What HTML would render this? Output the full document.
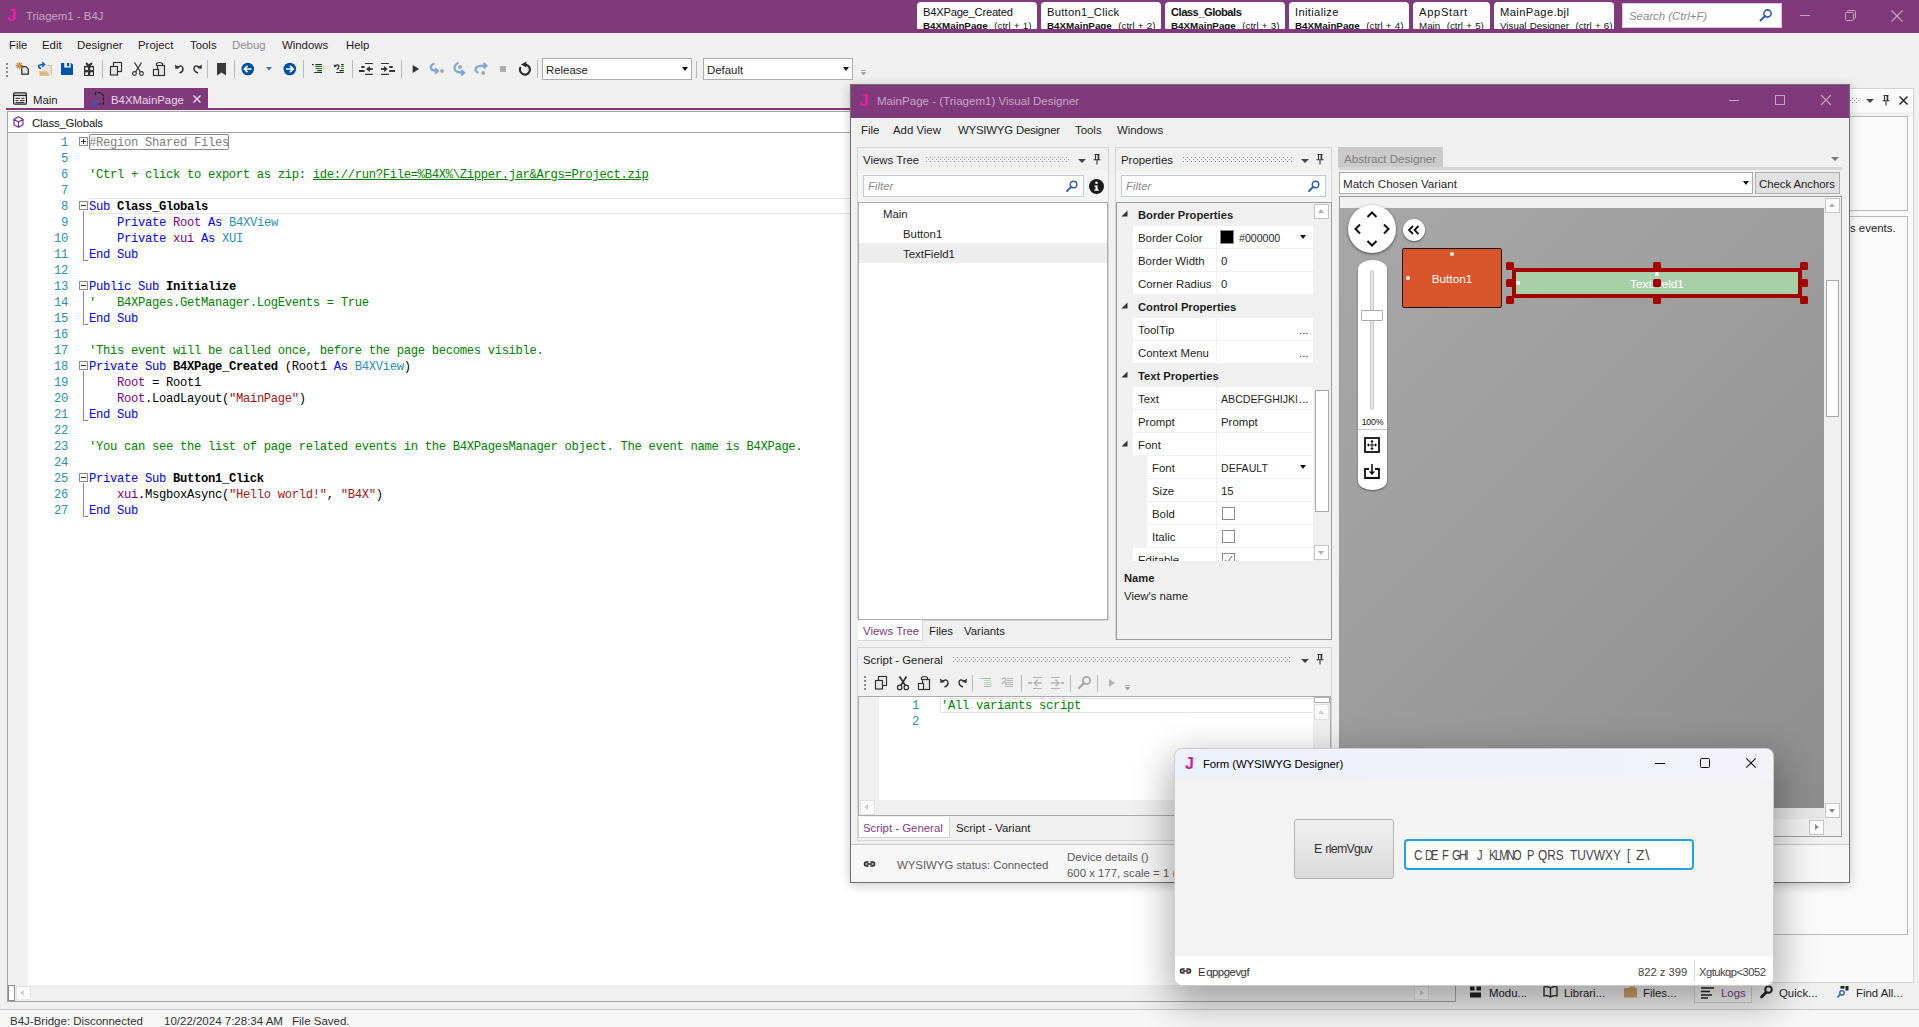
<!DOCTYPE html>
<html><head><meta charset="utf-8">
<style>
*{box-sizing:border-box;margin:0;padding:0}
html,body{width:1919px;height:1027px;overflow:hidden;background:#f0f0f0;font-family:"Liberation Sans",sans-serif;font-size:11.4px;color:#1e1e1e}
.a{position:absolute}
.t{position:absolute;white-space:nowrap;line-height:16px}
svg{position:absolute;overflow:visible}
/* main title */
#tb{left:0;top:0;width:1919px;height:33px;background:#80397b}
.qt{position:absolute;top:2px;height:27px;background:#fff;border-radius:4px 4px 1px 1px;overflow:hidden}
.qt .l1{position:absolute;left:6px;top:3px;font-size:11.2px;letter-spacing:-0.25px;line-height:14px;white-space:nowrap;color:#111}
.qt .l2{position:absolute;left:6px;top:18px;font-size:9.8px;line-height:12px;white-space:nowrap;color:#111;word-spacing:0.5px}
.qt .l2 b{font-weight:bold}
.mi{position:absolute;top:37px;font-size:11.4px;line-height:16px;white-space:nowrap;color:#1b1b1b}
/* code */
.ln{margin-top:1px;position:absolute;left:28px;width:40px;text-align:right;color:#2b91af;font-family:"Liberation Mono",monospace;font-size:12.2px;letter-spacing:-0.32px;line-height:17px;height:16px}
.cl{margin-top:1px;position:absolute;left:89px;white-space:pre;font-family:"Liberation Mono",monospace;font-size:12.2px;letter-spacing:-0.32px;line-height:17px;height:16px;color:#000}
.k{color:#0000ff}.i{color:#800080}.ty{color:#2b91af}.c{color:#008000}.s{color:#a31515}.b{font-weight:bold}
.dots{position:absolute;height:5px;background:conic-gradient(#c4c4c4 25%,transparent 0 50%,#c4c4c4 0 75%,transparent 0) 0 0/2px 2px}
.dd{border:4px solid transparent;border-top:4px solid #444;border-bottom:0;width:0;height:0}
.hd{position:absolute;width:8px;height:8px;background:#a30000;border-radius:1.5px}
</style></head><body>

<div id="main">
<svg width="0" height="0" style="left:0;top:0"><defs><pattern id="dp" width="4" height="4" patternUnits="userSpaceOnUse"><rect x="0" y="0" width="1" height="1" fill="#8e8e8e"/><rect x="2" y="2" width="1" height="1" fill="#8e8e8e"/></pattern></defs></svg>
<div id="tb" class="a"></div>
<!-- title content -->
<div class="t" style="left:7px;top:6px;font-size:17px;font-weight:bold;color:#e8209a;line-height:20px">J</div>
<div class="t" style="left:26px;top:8px;font-size:11.4px;color:#c9a6c7">Triagem1 - B4J</div>
<div class="qt" style="left:917px;width:120px"><div class="l1" style="letter-spacing:-0.24px">B4XPage_Created</div><div class="l2"><b>B4XMainPage</b>&nbsp; (ctrl + 1)</div></div>
<div class="qt" style="left:1041px;width:120px"><div class="l1" style="letter-spacing:0.26px">Button1_Click</div><div class="l2"><b>B4XMainPage</b>&nbsp; (ctrl + 2)</div></div>
<div class="qt" style="left:1165px;width:120px"><div class="l1" style="font-weight:bold;letter-spacing:-0.52px">Class_Globals</div><div class="l2"><b>B4XMainPage</b>&nbsp; (ctrl + 3)</div></div>
<div class="qt" style="left:1289px;width:120px"><div class="l1" style="letter-spacing:0.34px">Initialize</div><div class="l2"><b>B4XMainPage</b>&nbsp; (ctrl + 4)</div></div>
<div class="qt" style="left:1413px;width:77px"><div class="l1" style="letter-spacing:0.67px">AppStart</div><div class="l2">Main&nbsp; (ctrl + 5)</div></div>
<div class="qt" style="left:1494px;width:120px"><div class="l1" style="letter-spacing:0.39px">MainPage.bjl</div><div class="l2">Visual Designer&nbsp; (ctrl + 6)</div></div>
<div class="a" style="left:1622px;top:3px;width:160px;height:25px;background:#fff;border:1px solid #d9c9d9"></div>
<div class="t" style="left:1629px;top:8px;font-size:11.4px;font-style:italic;color:#8a8a8a">Search (Ctrl+F)</div>
<svg style="left:1759px;top:8px" width="14" height="14" viewBox="0 0 14 14"><circle cx="8.5" cy="5.5" r="3.6" fill="none" stroke="#2a5caa" stroke-width="1.6"/><path d="M6 8 L1.5 12.5" stroke="#2a5caa" stroke-width="2" stroke-linecap="round"/></svg>
<!-- window buttons -->
<div class="a" style="left:1800px;top:15px;width:10px;height:1px;background:#c7a3c5"></div>
<svg style="left:1845px;top:10px" width="11" height="11" viewBox="0 0 11 11"><rect x="0.5" y="2.5" width="8" height="8" rx="1" fill="none" stroke="#c7a3c5"/><path d="M2.5 2.5 V1.5 Q2.5 0.5 3.5 0.5 H9.5 Q10.5 0.5 10.5 1.5 V7.5 Q10.5 8.5 9.5 8.5 H8.5" fill="none" stroke="#c7a3c5"/></svg>
<svg style="left:1891px;top:10px" width="12" height="12" viewBox="0 0 12 12"><path d="M0.5 0.5 L11.5 11.5 M11.5 0.5 L0.5 11.5" stroke="#c7a3c5" stroke-width="1.1"/></svg>

<!-- menu -->
<div class="mi" style="left:9px">File</div>
<div class="mi" style="left:42px">Edit</div>
<div class="mi" style="left:77px">Designer</div>
<div class="mi" style="left:138px">Project</div>
<div class="mi" style="left:190px">Tools</div>
<div class="mi" style="left:232px;color:#8e8e8e">Debug</div>
<div class="mi" style="left:282px">Windows</div>
<div class="mi" style="left:346px">Help</div>

<!-- toolbar placeholder -->
<!-- toolbar -->
<svg style="left:0;top:56px" width="560" height="28" viewBox="0 0 560 28">
<!-- grip -->
<g fill="#8a8a8a"><rect x="6" y="7" width="2" height="2"/><rect x="6" y="11" width="2" height="2"/><rect x="6" y="15" width="2" height="2"/><rect x="6" y="19" width="2" height="2"/></g>
<!-- new -->
<path d="M21.800 10.600 H26 L28.300 12.900 V18.200 H21.800 Z" fill="#e6e6e6" stroke="#333" stroke-width="1.300"/>
<g stroke="#c8731a" stroke-width="1.100"><path d="M19.400 6 V13.200 M15.800 9.600 H23 M16.900 7.100 L21.900 12.100 M21.900 7.100 L16.900 12.100"/></g><circle cx="19.400" cy="9.600" r="1" fill="#fff" stroke="#c8731a" stroke-width="0.800"/>
<!-- open -->
<path d="M46.500 9.500 H51.200 V19.200" fill="none" stroke="#deb777" stroke-width="1.200"/><rect x="42" y="10.200" width="8.500" height="8" fill="#e4e4e4"/>
<path d="M39.200 15.300 H46.500 L50 19.700 H39.700 Z" fill="#deb777"/>
<path d="M41 12.400 Q37.300 11.200 39.300 9.400 Q40.600 8.500 43.300 8.500" fill="none" stroke="#0a56b0" stroke-width="1.700"/><path d="M42.100 6.300 L44.600 8.500 L42.100 10.700" fill="none" stroke="#0a56b0" stroke-width="1.500"/>
<!-- save -->
<path d="M61 7 H71.200 L73 8.800 V19 H61 Z" fill="#0054a6"/><rect x="64.200" y="7" width="6.500" height="4.600" fill="#ececec"/><rect x="67" y="7" width="2.100" height="3.200" fill="#0054a6"/>
<!-- gift -->
<rect x="84" y="9.800" width="10" height="10.200" fill="#333"/><g fill="#f2f2f2"><rect x="85.300" y="11.400" width="2.600" height="2.600"/><rect x="90.300" y="11.400" width="2.600" height="2.600"/><rect x="85.300" y="16.300" width="2.600" height="2.700"/><rect x="90.300" y="16.300" width="2.600" height="2.700"/></g>
<path d="M89 10 L86.800 7.700 M89 10 L91.200 7.700" stroke="#333" stroke-width="2.300" fill="none" stroke-linecap="round"/>
<!-- sep -->
<rect x="102" y="4" width="1" height="18" fill="#b9b9b9"/>
<!-- copy -->
<rect x="113.5" y="6.5" width="8" height="9" fill="#f0f0f0" stroke="#333" stroke-width="1.2"/><rect x="110.500" y="10.500" width="7" height="8.500" fill="#e6e6e6" stroke="#333" stroke-width="1.2"/>
<!-- cut -->
<path d="M134.500 6.500 L140.500 16 M141.500 6.500 L135.500 16" stroke="#333" stroke-width="1.3" fill="none"/><circle cx="134.500" cy="17.500" r="1.900" fill="none" stroke="#333" stroke-width="1.1"/><circle cx="141.500" cy="17.500" r="1.900" fill="none" stroke="#333" stroke-width="1.1"/>
<!-- paste -->
<path d="M156.500 10 V7.500 Q159.500 5.500 162.500 7.500 V10" fill="none" stroke="#333" stroke-width="1.2"/><rect x="157.500" y="9.500" width="7" height="10" fill="#e6e6e6" stroke="#333" stroke-width="1.2"/><rect x="153.500" y="13.500" width="5" height="6" fill="#f0f0f0" stroke="#333" stroke-width="1.2"/>
<!-- undo -->
<path d="M176.500 11.500 Q183 8 183 13 Q183 16 179.500 17" fill="none" stroke="#333" stroke-width="1.5"/><path d="M175 8.500 L175.500 13 L180 12" fill="#333"/>
<!-- redo -->
<path d="M200.500 11.500 Q194 8 194 12.500 Q194 15.500 198 17" fill="none" stroke="#333" stroke-width="1.5"/><path d="M202 8.500 L201.500 13 L197 12" fill="#333"/>
<rect x="207" y="4" width="1" height="18" fill="#b9b9b9"/>
<!-- bookmark -->
<path d="M217 7 H226 V19.500 L221.500 16.500 L217 19.500 Z" fill="#3a3a3a"/>
<rect x="234" y="4" width="1" height="18" fill="#b9b9b9"/>
<!-- back -->
<circle cx="247.800" cy="13" r="6.300" fill="#0050a0"/><path d="M251.500 13 H244.500 M247.500 9.800 L244.300 13 L247.500 16.200" stroke="#fff" stroke-width="1.700" fill="none"/>
<path d="M266 11 H272 L269 14.500 Z" fill="#3d6fb6"/>
<circle cx="289.800" cy="13" r="6.300" fill="#0050a0"/><path d="M286 13 H293 M290 9.800 L293.200 13 L290 16.200" stroke="#fff" stroke-width="1.700" fill="none"/>
<rect x="303" y="4" width="1" height="18" fill="#b9b9b9"/>
<!-- comment -->
<g stroke="#333" stroke-width="1.100"><path d="M312 8.600 H313.700 M315.300 8.600 H322 M317.200 14.600 H322 M314.100 16.500 H322"/></g><g stroke="#2e8b1e" stroke-width="1.100"><path d="M315.300 10.500 H322 M315.300 12.500 H322"/></g>
<!-- uncomment -->
<g stroke="#333" stroke-width="1.100" fill="none"><path d="M341 8.600 H343.800 M339.400 14.600 H343.800 M336.100 16.500 H343.800"/><path d="M335 9.700 Q338.600 7.800 339 10.300 Q339 12 336.800 13.700" stroke-width="1.300"/></g><path d="M333.800 8.200 L334.200 11.400 L337 10.200 Z" fill="#333"/><g stroke="#2e8b1e" stroke-width="1.100"><path d="M341 10.500 H343.800 M341 12.500 H343.800"/></g>
<rect x="352" y="4" width="1" height="18" fill="#b9b9b9"/>
<!-- outdent -->
<g stroke="#333" fill="none"><path d="M365 7.500 H372.800 M365 18.400 H372.800" stroke-width="1.100"/><path d="M361.300 11 H364.500 M359 15 H364.500" stroke-width="1.900"/><path d="M367.500 13 H372.800" stroke-width="1.800"/></g><path d="M366 13 L369.800 9.900 V16.100 Z" fill="#333"/>
<!-- indent -->
<g stroke="#333" fill="none"><path d="M381 7.500 H388.900 M381 18.400 H388.900" stroke-width="1.100"/><path d="M389.200 11 H392.700 M389.200 15 H395" stroke-width="1.900"/><path d="M381 13 H386" stroke-width="1.800"/></g><path d="M387.800 13 L384 9.900 V16.100 Z" fill="#333"/>
<rect x="401" y="4" width="1" height="18" fill="#b9b9b9"/>
<!-- play -->
<path d="M412.700 9 L419.200 13 L412.700 17.100 Z" fill="#333"/>
<!-- step in -->
<path d="M434.600 7.500 Q430.500 8.800 430.800 11.500 Q431.300 14.800 437 15" fill="none" stroke="#7ca8d4" stroke-width="2.200"/><path d="M435 12.200 L438 15 L435 17.800" fill="none" stroke="#7ca8d4" stroke-width="2"/><circle cx="442" cy="15" r="2" fill="#a9a9a9"/>
<!-- step over -->
<path d="M458.500 6.800 Q454.300 8.500 454.600 12.500 Q455.100 16.600 463 16.800" fill="none" stroke="#7ca8d4" stroke-width="2.200"/><path d="M461.200 14 L464.200 16.800 L461.200 19.600" fill="none" stroke="#7ca8d4" stroke-width="2"/><circle cx="460" cy="11" r="2" fill="#a9a9a9"/>
<!-- step out -->
<path d="M478.400 17 Q474.500 15 476 11.800 Q477.500 9.600 485.500 9.700" fill="none" stroke="#7ca8d4" stroke-width="2.200"/><path d="M483.600 6.900 L486.600 9.700 L483.600 12.500" fill="none" stroke="#7ca8d4" stroke-width="2"/><circle cx="483.200" cy="17" r="2" fill="#a9a9a9"/>
<!-- stop -->
<rect x="500" y="10" width="6" height="6" fill="#adadad"/>
<!-- restart -->
<path d="M520.600 11 A5 5 0 1 0 526 8.700" fill="none" stroke="#2d2d2d" stroke-width="2.200"/><path d="M521 8.600 L526.400 5.400 L526.400 11.600 Z" fill="#2d2d2d"/>
<rect x="537" y="4" width="1" height="18" fill="#b9b9b9"/>
</svg>

<div class="a" style="left:696px;top:61px;width:1px;height:17px;background:#b9b9b9"></div>
<svg style="left:861px;top:70px" width="6" height="6" viewBox="0 0 6 6"><path d="M0 0.500 H5 M0.500 2.500 H4.500 L2.500 5 Z" stroke="#9a9a9a" fill="#9a9a9a" stroke-width="0.800"/></svg>


<!-- combos -->
<div class="a" style="left:542px;top:58px;width:150px;height:22px;background:#fff;border:1px solid #ababab"></div>
<div class="t" style="left:546px;top:62px;font-size:11.4px">Release</div>
<div class="a" style="left:682px;top:67px;border:3px solid transparent;border-top:4px solid #111;border-bottom:0"></div>
<div class="a" style="left:703px;top:58px;width:150px;height:22px;background:#fff;border:1px solid #ababab"></div>
<div class="t" style="left:707px;top:62px;font-size:11.4px">Default</div>
<div class="a" style="left:843px;top:67px;border:3px solid transparent;border-top:4px solid #111;border-bottom:0"></div>

<!-- doc tabs -->
<div class="a" style="left:84px;top:88px;width:124px;height:21px;background:#80397b"></div>
<div class="a" style="left:6px;top:108px;width:1450px;height:2px;background:#80397b"></div>
<div class="t" style="left:33px;top:92px;font-size:11.4px">Main</div>
<div class="t" style="left:111px;top:92px;font-size:11.4px;color:#e9d9e8">B4XMainPage</div>
<svg style="left:193px;top:95px" width="8" height="8" viewBox="0 0 8 8"><path d="M0.5 0.5 L7.5 7.5 M7.5 0.5 L0.5 7.5" stroke="#f0e4ef" stroke-width="1.2"/></svg>

<!-- tab icons -->
<svg style="left:13px;top:92px" width="14" height="13" viewBox="0 0 14 13"><rect x="0.6" y="0.8" width="12.8" height="11.4" rx="1" fill="none" stroke="#222" stroke-width="1.2"/><path d="M0.6 3.4 H13.4" stroke="#222" stroke-width="1.4"/><path d="M2.6 6.3 H7 M8.4 6.3 H11.4 M2.6 8.6 H5.4 M6.8 8.6 H11.4 M2.6 10.6 H11.4" stroke="#222" stroke-width="1" fill="none"/></svg>
<svg style="left:92px;top:92px" width="12" height="14" viewBox="0 0 12 14"><path d="M3.5 3 V0.6 H8.5 L11.4 3.5 V12 H6.5" fill="none" stroke="#1c1c1c" stroke-width="1.1" stroke-dasharray="3.2 1.3"/><path d="M0.5 10 H4.5 M3 8.3 L4.8 10 L3 11.7 M5.5 12.3 H1.8 M3.2 10.8 L1.6 12.3 L3.2 13.8" fill="none" stroke="#1a66d0" stroke-width="1.1"/></svg>
<!-- editor frame -->
<div class="a" style="left:7px;top:111px;width:1449px;height:891px;background:#fff;border:1px solid #a5a5a5"></div>
<div class="a" style="left:8px;top:132px;width:1447px;height:1px;background:#a5a5a5"></div>
<div class="a" style="left:8px;top:133px;width:20px;height:852px;background:#f0f0f0"></div>
<svg style="left:13px;top:116px" width="11" height="12" viewBox="0 0 11 12"><path d="M5.5 0.8 L10 3.3 V8.7 L5.5 11.2 L1 8.700 V3.300 Z M1 3.300 L5.500 6 L10 3.300 M5.500 6 V11.200" fill="none" stroke="#6a2c91" stroke-width="1.100" stroke-linejoin="round"/></svg>
<div class="t" style="left:32px;top:115px;font-size:11.4px;letter-spacing:-0.2px;color:#111">Class_Globals</div>
<!-- current line -->
<div class="a" style="left:89px;top:198px;width:1349px;height:16px;border-top:1px solid #e6e6e6;border-bottom:1px solid #e6e6e6"></div>
<!-- region box -->
<div class="a" style="left:89px;top:134px;width:140px;height:16px;border:1px solid #8a8a8a;border-radius:2px"></div>
<!--CODE-->
<div class="ln" style="top:134px">1</div>
<div class="cl" style="top:134px"><span style="color:#808080">#Region Shared Files</span></div>
<svg style="left:79px;top:137px" width="9" height="9" viewBox="0 0 9 9"><rect x="0.5" y="0.5" width="8" height="8" fill="#fff" stroke="#8c8c8c"/><path d="M2 4.5 H7 M4.5 2 V7" stroke="#333" stroke-width="1"/></svg>
<div class="ln" style="top:150px">5</div>
<div class="ln" style="top:166px">6</div>
<div class="cl" style="top:166px"><span class="c">'Ctrl + click to export as zip: <u>ide://run?File=%B4X%\Zipper.jar&amp;Args=Project.zip</u></span></div>
<div class="ln" style="top:182px">7</div>
<div class="ln" style="top:198px">8</div>
<div class="cl" style="top:198px"><span class="k">Sub</span> <b>Class_Globals</b></div>
<svg style="left:79px;top:201px" width="9" height="9" viewBox="0 0 9 9"><rect x="0.5" y="0.5" width="8" height="8" fill="#fff" stroke="#8c8c8c"/><path d="M2 4.5 H7" stroke="#333" stroke-width="1"/></svg>
<div class="a" style="left:83px;top:211px;width:5px;height:50px;border-left:1px solid #8c8c8c;border-bottom:1px solid #8c8c8c"></div>
<div class="ln" style="top:214px">9</div>
<div class="cl" style="top:214px">    <span class="k">Private</span> <span class="i">Root</span> <span class="k">As</span> <span class="ty">B4XView</span></div>
<div class="ln" style="top:230px">10</div>
<div class="cl" style="top:230px">    <span class="k">Private</span> <span class="i">xui</span> <span class="k">As</span> <span class="ty">XUI</span></div>
<div class="ln" style="top:246px">11</div>
<div class="cl" style="top:246px"><span class="k">End Sub</span></div>
<div class="ln" style="top:262px">12</div>
<div class="ln" style="top:278px">13</div>
<div class="cl" style="top:278px"><span class="k">Public Sub</span> <b>Initialize</b></div>
<svg style="left:79px;top:281px" width="9" height="9" viewBox="0 0 9 9"><rect x="0.5" y="0.5" width="8" height="8" fill="#fff" stroke="#8c8c8c"/><path d="M2 4.5 H7" stroke="#333" stroke-width="1"/></svg>
<div class="a" style="left:83px;top:291px;width:5px;height:34px;border-left:1px solid #8c8c8c;border-bottom:1px solid #8c8c8c"></div>
<div class="ln" style="top:294px">14</div>
<div class="cl" style="top:294px"><span class="c">'   B4XPages.GetManager.LogEvents = True</span></div>
<div class="ln" style="top:310px">15</div>
<div class="cl" style="top:310px"><span class="k">End Sub</span></div>
<div class="ln" style="top:326px">16</div>
<div class="ln" style="top:342px">17</div>
<div class="cl" style="top:342px"><span class="c">'This event will be called once, before the page becomes visible.</span></div>
<div class="ln" style="top:358px">18</div>
<div class="cl" style="top:358px"><span class="k">Private Sub</span> <b>B4XPage_Created</b> (Root1 <span class="k">As</span> <span class="ty">B4XView</span>)</div>
<svg style="left:79px;top:361px" width="9" height="9" viewBox="0 0 9 9"><rect x="0.5" y="0.5" width="8" height="8" fill="#fff" stroke="#8c8c8c"/><path d="M2 4.5 H7" stroke="#333" stroke-width="1"/></svg>
<div class="a" style="left:83px;top:371px;width:5px;height:50px;border-left:1px solid #8c8c8c;border-bottom:1px solid #8c8c8c"></div>
<div class="ln" style="top:374px">19</div>
<div class="cl" style="top:374px">    <span class="i">Root</span> = Root1</div>
<div class="ln" style="top:390px">20</div>
<div class="cl" style="top:390px">    <span class="i">Root</span>.LoadLayout(<span class="s">"MainPage"</span>)</div>
<div class="ln" style="top:406px">21</div>
<div class="cl" style="top:406px"><span class="k">End Sub</span></div>
<div class="ln" style="top:422px">22</div>
<div class="ln" style="top:438px">23</div>
<div class="cl" style="top:438px"><span class="c">'You can see the list of page related events in the B4XPagesManager object. The event name is B4XPage.</span></div>
<div class="ln" style="top:454px">24</div>
<div class="ln" style="top:470px">25</div>
<div class="cl" style="top:470px"><span class="k">Private Sub</span> <b>Button1_Click</b></div>
<svg style="left:79px;top:473px" width="9" height="9" viewBox="0 0 9 9"><rect x="0.5" y="0.5" width="8" height="8" fill="#fff" stroke="#8c8c8c"/><path d="M2 4.5 H7" stroke="#333" stroke-width="1"/></svg>
<div class="a" style="left:83px;top:483px;width:5px;height:34px;border-left:1px solid #8c8c8c;border-bottom:1px solid #8c8c8c"></div>
<div class="ln" style="top:486px">26</div>
<div class="cl" style="top:486px">    <span class="i">xui</span>.MsgboxAsync(<span class="s">"Hello world!"</span>, <span class="s">"B4X"</span>)</div>
<div class="ln" style="top:502px">27</div>
<div class="cl" style="top:502px"><span class="k">End Sub</span></div>
<!--/CODE-->
<!-- hscroll -->
<div class="a" style="left:8px;top:985px;width:1447px;height:16px;background:#f0f0f0"></div>
<div class="a" style="left:1414px;top:986px;width:15px;height:14px;background:#fafafa;border:1px solid #e0e0e0"></div>
<div class="a" style="left:1420px;top:990px;border:3.5px solid transparent;border-left:4px solid #d0d0d0;border-right:0"></div>
<div class="a" style="left:16px;top:986px;width:15px;height:14px;background:#fafafa;border:1px solid #e4e4e4"></div>
<div class="a" style="left:20px;top:990px;border:3.5px solid transparent;border-right:4px solid #d0d0d0;border-left:0"></div>
<div class="a" style="left:1438px;top:133px;width:17px;height:852px;background:#f0f0f0"></div>
<div class="a" style="left:8px;top:985px;width:7px;height:16px;background:#fff;border:1px solid #8a8a8a"></div>

<!-- right panel -->
<div class="a" style="left:1460px;top:88px;width:454px;height:895px;background:#f9f9f9;border:1px solid #d2d2d2"></div>
<div class="a" style="left:1461px;top:89px;width:452px;height:23px;background:#fbfbfb"></div>
<div class="a" style="left:1461px;top:112px;width:452px;height:4px;background:#f0f0f0"></div>
<svg style="left:1560px;top:98px" width="299" height="5"><rect width="299" height="5" fill="url(#dp)"/></svg>
<div class="a dd" style="left:1866px;top:99px"></div>
<svg class="pin" style="left:1882px;top:95px" width="8" height="11" viewBox="0 0 8 11"><path d="M1.500 0.500 H6.500 M2.500 0.500 V5.500 M5.700 0.500 V5.500 M0.500 5.800 H7.500 M4 6 V10.500" stroke="#333" stroke-width="1.100" fill="none"/><rect x="4.600" y="0.500" width="1.400" height="5" fill="#333"/></svg>
<svg style="left:1899px;top:96px" width="9" height="9" viewBox="0 0 9 9"><path d="M0.500 0.500 L8.500 8.500 M8.500 0.500 L0.500 8.500" stroke="#222" stroke-width="1.500"/></svg>
<div class="a" style="left:1466px;top:116px;width:442px;height:95px;background:#fafafa;border:1px solid #b9b9b9"></div>
<div class="a" style="left:1466px;top:216px;width:442px;height:719px;background:#fafafa;border:1px solid #b9b9b9"></div>
<div class="t" style="left:1850px;top:220px">s events.</div>
<!-- bottom tabs -->
<div class="a" style="left:1694px;top:984px;width:58px;height:19px;background:#f5f5f5;border:1px solid #cfcfcf;border-top:0"></div>
<svg style="left:1470px;top:986px" width="12" height="13" viewBox="0 0 12 13"><rect x="0" y="0.500" width="4.500" height="4" fill="#222"/><rect x="6.500" y="0.500" width="4.500" height="4" fill="#222"/><rect x="0" y="6.500" width="11" height="5" fill="#222"/></svg>
<div class="t" style="left:1489px;top:985px">Modu...</div>
<svg style="left:1543px;top:986px" width="15" height="12" viewBox="0 0 15 12"><path d="M7.500 2 Q4 0 1 1 V10 Q4 9 7.500 11 Q11 9 14 10 V1 Q11 0 7.500 2 V11" fill="none" stroke="#222" stroke-width="1.300"/></svg>
<div class="t" style="left:1564px;top:985px">Librari...</div>
<svg style="left:1624px;top:986px" width="13" height="12" viewBox="0 0 13 12"><path d="M0 2 H5 L6 0.500 H11 V2 H13 V11.500 H0 Z" fill="#c9a365"/></svg>
<div class="t" style="left:1643px;top:985px">Files...</div>
<svg style="left:1701px;top:987px" width="13" height="12" viewBox="0 0 13 12"><path d="M0 1 H13 M0 4.500 H9 M0 8 H11 M0 11 H7" stroke="#222" stroke-width="1.600"/></svg>
<div class="t" style="left:1721px;top:985px;color:#80397b">Logs</div>
<svg style="left:1760px;top:985px" width="13" height="14" viewBox="0 0 13 14"><circle cx="8.500" cy="4.500" r="3.300" fill="none" stroke="#222" stroke-width="2"/><path d="M6 7.500 L1.500 12" stroke="#222" stroke-width="2.600" stroke-linecap="round"/></svg>
<div class="t" style="left:1779px;top:985px">Quick...</div>
<svg style="left:1837px;top:986px" width="12" height="13" viewBox="0 0 12 13"><rect x="3.500" y="0" width="4" height="2.600" fill="#222"/><rect x="8.500" y="0" width="3" height="4.500" fill="#222"/><circle cx="5" cy="6.800" r="2.200" fill="none" stroke="#2a5caa" stroke-width="1.300"/><path d="M3.300 8.500 L0.800 11" stroke="#2a5caa" stroke-width="1.600" stroke-linecap="round"/></svg>
<div class="t" style="left:1856px;top:985px">Find All...</div>
<!-- status -->
<div class="a" style="left:0;top:1009px;width:1919px;height:1px;background:#c8c8c8"></div>
<div class="a" style="left:0;top:1010px;width:1919px;height:17px;background:#f7f7f7"></div>
<div class="t" style="left:10px;top:1013px;font-size:11.5px;color:#333">B4J-Bridge: Disconnected</div>
<div class="t" style="left:164px;top:1013px;font-size:11.5px;color:#333">10/22/2024 7:28:34 AM</div>
<div class="t" style="left:292px;top:1013px;font-size:11.5px;color:#333">File Saved.</div>
</div>

<!-- ===== DESIGNER WINDOW ===== -->
<div id="des" class="a" style="left:850px;top:84px;width:1000px;height:799px;background:#f0f0f0;border:1px solid #6e6e6e;box-shadow:0 2px 10px rgba(0,0,0,0.22)"></div>
<div class="a" style="left:851px;top:85px;width:998px;height:33px;background:#80397b"></div>
<div class="t" style="left:859px;top:91px;font-size:17px;font-weight:bold;color:#e8209a;line-height:20px">J</div>
<div class="t" style="left:877px;top:93px;font-size:11.55px;color:#c9a6c7">MainPage - (Triagem1) Visual Designer</div>
<div class="a" style="left:1729px;top:100px;width:10px;height:1px;background:#c7a3c5"></div>
<div class="a" style="left:1775px;top:95px;width:10px;height:10px;border:1px solid #c7a3c5"></div>
<svg style="left:1821px;top:95px" width="10" height="10" viewBox="0 0 10 10"><path d="M0 0 L10 10 M10 0 L0 10" stroke="#c7a3c5" stroke-width="1.1"/></svg>
<!-- menu -->
<div class="t" style="left:861px;top:122px">File</div>
<div class="t" style="left:893px;top:122px">Add View</div>
<div class="t" style="left:958px;top:122px;letter-spacing:-0.2px">WYSIWYG Designer</div>
<div class="t" style="left:1075px;top:122px">Tools</div>
<div class="t" style="left:1117px;top:122px">Windows</div>

<!-- Views tree panel -->
<div class="a" style="left:857px;top:147px;width:252px;height:474px;background:#f4f4f4;border:1px solid #d4d4d4"></div>
<div class="a" style="left:858px;top:148px;width:250px;height:22px;background:#f0f0f0"></div>
<div class="t" style="left:863px;top:152px">Views Tree</div>
<svg style="left:926px;top:157px" width="143" height="5"><rect width="143" height="5" fill="url(#dp)"/></svg>
<div class="a dd" style="left:1078px;top:159px"></div>
<svg class="pin" style="left:1093px;top:154px" width="8" height="11" viewBox="0 0 8 11"><path d="M1.500 0.500 H6.500 M2.500 0.500 V5.500 M5.700 0.500 V5.500 M0.500 5.800 H7.500 M4 6 V10.500" stroke="#333" stroke-width="1.100" fill="none"/><rect x="4.600" y="0.500" width="1.400" height="5" fill="#333"/></svg>
<div class="a" style="left:863px;top:175px;width:221px;height:22px;background:#fff;border:1px solid #c3c9d6"></div>
<div class="t" style="left:868px;top:178px;font-style:italic;color:#8a8a8a">Filter</div>
<svg style="left:1066px;top:180px" width="12" height="12" viewBox="0 0 12 12"><circle cx="7.500" cy="4.500" r="3.300" fill="none" stroke="#2a5caa" stroke-width="1.400"/><path d="M5.200 6.800 L1 11" stroke="#2a5caa" stroke-width="1.800" stroke-linecap="round"/></svg>
<svg style="left:1089px;top:179px" width="15" height="15" viewBox="0 0 15 15"><circle cx="7.500" cy="7.500" r="7.500" fill="#1a1a1a"/><circle cx="7.500" cy="3.800" r="1.300" fill="#fff"/><path d="M5.500 6.500 H8.600 V10.600 H9.800 V11.800 H5.300 V10.600 H6.500 V7.700 H5.500 Z" fill="#fff"/></svg>
<div class="a" style="left:858px;top:202px;width:250px;height:418px;background:#fff;border:1px solid #ababab"></div>
<div class="a" style="left:859px;top:243px;width:248px;height:20px;background:#ededed"></div>
<div class="t" style="left:883px;top:206px">Main</div>
<div class="t" style="left:903px;top:226px">Button1</div>
<div class="t" style="left:903px;top:246px">TextField1</div>
<!-- tree tabs -->
<div class="a" style="left:858px;top:620px;width:65px;height:21px;background:#fff;border:1px solid #d9d9d9;border-top:0;border-left:0"></div>
<div class="t" style="left:863px;top:623px;color:#80397b">Views Tree</div>
<div class="t" style="left:929px;top:623px">Files</div>
<div class="t" style="left:964px;top:623px">Variants</div>

<!-- Properties panel -->
<div class="a" style="left:1115px;top:147px;width:217px;height:493px;background:#f4f4f4;border:1px solid #d4d4d4"></div>
<div class="a" style="left:1116px;top:148px;width:215px;height:22px;background:#f0f0f0"></div>
<div class="t" style="left:1121px;top:152px">Properties</div>
<svg style="left:1183px;top:157px" width="109" height="5"><rect width="109" height="5" fill="url(#dp)"/></svg>
<div class="a dd" style="left:1301px;top:159px"></div>
<svg class="pin" style="left:1316px;top:154px" width="8" height="11" viewBox="0 0 8 11"><path d="M1.500 0.500 H6.500 M2.500 0.500 V5.500 M5.700 0.500 V5.500 M0.500 5.800 H7.500 M4 6 V10.500" stroke="#333" stroke-width="1.100" fill="none"/><rect x="4.600" y="0.500" width="1.400" height="5" fill="#333"/></svg>
<div class="a" style="left:1121px;top:175px;width:205px;height:22px;background:#fff;border:1px solid #c3c9d6"></div>
<div class="t" style="left:1126px;top:178px;font-style:italic;color:#8a8a8a">Filter</div>
<svg style="left:1308px;top:180px" width="12" height="12" viewBox="0 0 12 12"><circle cx="7.500" cy="4.500" r="3.300" fill="none" stroke="#2a5caa" stroke-width="1.400"/><path d="M5.200 6.800 L1 11" stroke="#2a5caa" stroke-width="1.800" stroke-linecap="round"/></svg>
<!--PGRID-->
<div class="a" style="left:1116px;top:202px;width:216px;height:438px;background:#f0f0f0;border:1px solid #9c9c9c"></div>
<div class="a" style="left:1117px;top:203px;width:214px;height:358px;overflow:hidden">
<svg style="left:4px;top:7px" width="7" height="7" viewBox="0 0 7 7"><path d="M6.5 0.5 V6.5 H0.5 Z" fill="#333"/></svg>
<div class="t" style="left:21px;top:4px;font-weight:bold;font-size:11.2px">Border Properties</div>
<div class="a" style="left:16px;top:23px;width:83px;height:22px;background:#fff"></div>
<div class="a" style="left:100px;top:23px;width:96px;height:22px;background:#fff"></div>
<div class="t" style="left:21px;top:27px">Border Color</div>
<div class="a" style="left:103px;top:27px;width:14px;height:14px;background:#000;border:1px solid #8a8a8a"></div>
<div class="t" style="left:122px;top:27px;font-size:10.6px">#000000</div>
<div class="a" style="left:183px;top:32px;border:3.5px solid transparent;border-top:4.5px solid #111;border-bottom:0"></div>
<div class="a" style="left:16px;top:46px;width:83px;height:22px;background:#fff"></div>
<div class="a" style="left:100px;top:46px;width:96px;height:22px;background:#fff"></div>
<div class="t" style="left:21px;top:50px">Border Width</div>
<div class="t" style="left:104px;top:50px;font-size:11.4px">0</div>
<div class="a" style="left:16px;top:69px;width:83px;height:22px;background:#fff"></div>
<div class="a" style="left:100px;top:69px;width:96px;height:22px;background:#fff"></div>
<div class="t" style="left:21px;top:73px">Corner Radius</div>
<div class="t" style="left:104px;top:73px;font-size:11.4px">0</div>
<svg style="left:4px;top:99px" width="7" height="7" viewBox="0 0 7 7"><path d="M6.5 0.5 V6.5 H0.5 Z" fill="#333"/></svg>
<div class="t" style="left:21px;top:96px;font-weight:bold;font-size:11.2px">Control Properties</div>
<div class="a" style="left:16px;top:115px;width:83px;height:22px;background:#fff"></div>
<div class="a" style="left:100px;top:115px;width:96px;height:22px;background:#fff"></div>
<div class="t" style="left:21px;top:119px">ToolTip</div>
<div class="t" style="left:182px;top:119px">...</div>
<div class="a" style="left:16px;top:138px;width:83px;height:22px;background:#fff"></div>
<div class="a" style="left:100px;top:138px;width:96px;height:22px;background:#fff"></div>
<div class="t" style="left:21px;top:142px">Context Menu</div>
<div class="t" style="left:182px;top:142px">...</div>
<svg style="left:4px;top:168px" width="7" height="7" viewBox="0 0 7 7"><path d="M6.5 0.5 V6.5 H0.5 Z" fill="#333"/></svg>
<div class="t" style="left:21px;top:165px;font-weight:bold;font-size:11.2px">Text Properties</div>
<div class="a" style="left:16px;top:184px;width:83px;height:22px;background:#fff"></div>
<div class="a" style="left:100px;top:184px;width:96px;height:22px;background:#fff"></div>
<div class="t" style="left:21px;top:188px">Text</div>
<div class="t" style="left:104px;top:188px;font-size:10.6px">ABCDEFGHIJKl</div>
<div class="t" style="left:182px;top:188px">...</div>
<div class="a" style="left:16px;top:207px;width:83px;height:22px;background:#fff"></div>
<div class="a" style="left:100px;top:207px;width:96px;height:22px;background:#fff"></div>
<div class="t" style="left:21px;top:211px">Prompt</div>
<div class="t" style="left:104px;top:211px;font-size:11.4px">Prompt</div>
<div class="a" style="left:16px;top:230px;width:83px;height:22px;background:#fff"></div>
<div class="a" style="left:100px;top:230px;width:96px;height:22px;background:#fff"></div>
<svg style="left:4px;top:237px" width="7" height="7" viewBox="0 0 7 7"><path d="M6.5 0.5 V6.5 H0.5 Z" fill="#333"/></svg>
<div class="t" style="left:21px;top:234px">Font</div>
<div class="a" style="left:30px;top:253px;width:69px;height:22px;background:#fff"></div>
<div class="a" style="left:100px;top:253px;width:96px;height:22px;background:#fff"></div>
<div class="t" style="left:35px;top:257px">Font</div>
<div class="t" style="left:104px;top:257px;font-size:10.6px">DEFAULT</div>
<div class="a" style="left:183px;top:262px;border:3.5px solid transparent;border-top:4.5px solid #111;border-bottom:0"></div>
<div class="a" style="left:30px;top:276px;width:69px;height:22px;background:#fff"></div>
<div class="a" style="left:100px;top:276px;width:96px;height:22px;background:#fff"></div>
<div class="t" style="left:35px;top:280px">Size</div>
<div class="t" style="left:104px;top:280px;font-size:11.4px">15</div>
<div class="a" style="left:30px;top:299px;width:69px;height:22px;background:#fff"></div>
<div class="a" style="left:100px;top:299px;width:96px;height:22px;background:#fff"></div>
<div class="t" style="left:35px;top:303px">Bold</div>
<div class="a" style="left:105px;top:304px;width:13px;height:13px;background:#fff;border:1px solid #8a8a8a"></div>
<div class="a" style="left:30px;top:322px;width:69px;height:22px;background:#fff"></div>
<div class="a" style="left:100px;top:322px;width:96px;height:22px;background:#fff"></div>
<div class="t" style="left:35px;top:326px">Italic</div>
<div class="a" style="left:105px;top:327px;width:13px;height:13px;background:#fff;border:1px solid #8a8a8a"></div>
<div class="a" style="left:16px;top:345px;width:83px;height:22px;background:#fff"></div>
<div class="a" style="left:100px;top:345px;width:96px;height:22px;background:#fff"></div>
<div class="t" style="left:21px;top:349px">Editable</div>
<div class="a" style="left:105px;top:350px;width:13px;height:13px;background:#fff;border:1px solid #8a8a8a"></div>
<svg style="left:107px;top:352px" width="9" height="9" viewBox="0 0 9 9"><path d="M1 5 L3.5 7.5 L8 1" stroke="#888" fill="none" stroke-width="1.2"/></svg>
<div class="a" style="left:196px;top:0;width:17px;height:358px;background:#f0f0f0"></div>
<div class="a" style="left:197px;top:1px;width:15px;height:15px;background:#fff;border:1px solid #c4c4c4"></div>
<div class="a" style="left:201px;top:6px;border:3.5px solid transparent;border-bottom:4px solid #b0b0b0;border-top:0"></div>
<div class="a" style="left:198px;top:187px;width:14px;height:122px;background:#fff;border:1px solid #a6a6a6"></div>
<div class="a" style="left:197px;top:342px;width:15px;height:15px;background:#fff;border:1px solid #c4c4c4"></div>
<div class="a" style="left:201px;top:348px;border:3.5px solid transparent;border-top:4px solid #b0b0b0;border-bottom:0"></div>
</div>
<div class="t" style="left:1124px;top:570px;font-weight:bold;font-size:11.2px">Name</div>
<div class="t" style="left:1124px;top:588px">View's name</div>
<!--/PGRID-->
<!--SCRIPT-->
<!-- Script panel -->
<div class="a" style="left:857px;top:647px;width:475px;height:194px;background:#f0f0f0;border:1px solid #d4d4d4"></div>
<div class="t" style="left:863px;top:652px">Script - General</div>
<svg style="left:953px;top:657px" width="338" height="5"><rect width="338" height="5" fill="url(#dp)"/></svg>
<div class="a dd" style="left:1301px;top:659px"></div>
<svg class="pin" style="left:1316px;top:654px" width="8" height="11" viewBox="0 0 8 11"><path d="M1.500 0.500 H6.500 M2.500 0.500 V5.500 M5.700 0.500 V5.500 M0.500 5.800 H7.500 M4 6 V10.500" stroke="#333" stroke-width="1.100" fill="none"/><rect x="4.600" y="0.500" width="1.400" height="5" fill="#333"/></svg>
<svg style="left:858px;top:670px" width="280" height="26" viewBox="0 0 280 26">
<g fill="#8a8a8a"><rect x="6" y="6" width="2" height="2"/><rect x="6" y="10" width="2" height="2"/><rect x="6" y="14" width="2" height="2"/><rect x="6" y="18" width="2" height="2"/></g>
<!-- copy at 17..29 -->
<rect x="20.500" y="6.500" width="8" height="9" fill="#f0f0f0" stroke="#333" stroke-width="1.200"/><rect x="17.500" y="10.500" width="7" height="8.500" fill="#e6e6e6" stroke="#333" stroke-width="1.200"/>
<!-- cut 39..51 -->
<path d="M41.500 6.500 L47.300 15.500 M48.500 6.500 L42.700 15.500" stroke="#333" stroke-width="1.700" fill="none"/><circle cx="41.700" cy="17.400" r="2.200" fill="none" stroke="#333" stroke-width="1.300"/><circle cx="48.300" cy="17.400" r="2.200" fill="none" stroke="#333" stroke-width="1.300"/>
<!-- paste 60..72 -->
<path d="M63.500 10 V7.500 Q66.500 5.500 69.500 7.500 V10" fill="none" stroke="#333" stroke-width="1.200"/><rect x="64.500" y="9.500" width="7" height="10" fill="#e6e6e6" stroke="#333" stroke-width="1.200"/><rect x="60.500" y="13.500" width="5" height="6" fill="#f0f0f0" stroke="#333" stroke-width="1.200"/>
<!-- undo 82..91 -->
<path d="M83.500 11.500 Q90 8 90 13 Q90 16 86.500 17" fill="none" stroke="#333" stroke-width="1.500"/><path d="M82 8.500 L82.500 13 L87 12" fill="#333"/>
<!-- redo 100..109 -->
<path d="M107.500 11.500 Q101 8 101 12.500 Q101 15.500 105 17" fill="none" stroke="#333" stroke-width="1.500"/><path d="M109 8.500 L108.500 13 L104 12" fill="#333"/>
<rect x="114" y="5" width="1" height="17" fill="#b9b9b9"/>
<!-- comment gray 122..133 -->
<g stroke="#b4b4b4" stroke-width="1"><path d="M122 8.500 H133 M126 16.500 H133"/></g><g stroke="#b5d4ae" stroke-width="1"><path d="M126 10.500 H133 M126 12.500 H133 M126 14.500 H133"/></g>
<g stroke="#b4b4b4" stroke-width="1" fill="none"><path d="M149 8.500 H155 M149 10.500 H155 M149 12.500 H155 M147 14.500 H155 M147 16.500 H155"/><path d="M144 9 Q147 7 148 9.500 Q148 11 144.500 13 H149" stroke-width="1.100"/></g>
<rect x="163" y="5" width="1" height="17" fill="#b9b9b9"/>
<g stroke="#b4b4b4" fill="none"><path d="M175 7.500 H184 M175 18.500 H184" stroke-width="1"/><path d="M170 13 H174" stroke-width="1.800"/><path d="M176 13 H184 M179.500 9.800 L176.300 13 L179.500 16.200" stroke-width="1.500"/></g>
<g stroke="#b4b4b4" fill="none"><path d="M193 7.500 H202 M193 18.500 H202" stroke-width="1"/><path d="M192.500 13 H200 M197.500 9.800 L200.700 13 L197.500 16.200" stroke-width="1.500"/><path d="M202.500 13 H206" stroke-width="1.800"/></g>
<rect x="212" y="5" width="1" height="17" fill="#b9b9b9"/>
<circle cx="228.500" cy="10.500" r="3.600" fill="none" stroke="#a8a8a8" stroke-width="1.800"/><path d="M226 13 L221 18" stroke="#a8a8a8" stroke-width="2.400" stroke-linecap="round"/>
<rect x="239" y="5" width="1" height="17" fill="#b9b9b9"/>
<path d="M251 9 L257 13 L251 17 Z" fill="#b4b4b4"/>
<path d="M267 15.500 H272 M267.500 17.500 H271.500 L269.500 20 Z" stroke="#9a9a9a" fill="#9a9a9a" stroke-width="0.800"/>
</svg>
<!-- script editor -->
<div class="a" style="left:858px;top:696px;width:473px;height:120px;background:#fff;border:1px solid #ababab"></div>
<div class="a" style="left:859px;top:697px;width:20px;height:103px;background:#f0f0f0"></div>
<div class="a" style="left:940px;top:698px;width:373px;height:15px;border:1px solid #e4e4e4;border-right:0"></div>
<div class="ln" style="left:879px;top:697px">1</div>
<div class="ln" style="left:879px;top:713px">2</div>
<div class="cl" style="left:941px;top:697px"><span class="c">'All variants script</span></div>
<div class="a" style="left:859px;top:800px;width:471px;height:15px;background:#f0f0f0"></div>
<div class="a" style="left:1313px;top:697px;width:17px;height:103px;background:#f0f0f0"></div>
<div class="a" style="left:1314px;top:697px;width:16px;height:6px;background:#fff;border:1px solid #b0b0b0"></div>
<div class="a" style="left:1314px;top:704px;width:15px;height:16px;background:#fafafa;border:1px solid #e0e0e0"></div>
<div class="a" style="left:1318px;top:710px;border:3.5px solid transparent;border-bottom:4px solid #d0d0d0;border-top:0"></div>
<div class="a" style="left:860px;top:800px;width:15px;height:15px;background:#fafafa;border:1px solid #e0e0e0"></div>
<div class="a" style="left:864px;top:804px;border:3.5px solid transparent;border-right:4px solid #d0d0d0;border-left:0"></div>
<!-- script tabs -->
<div class="a" style="left:858px;top:817px;width:92px;height:21px;background:#fff;border:1px solid #d4d4d4;border-top:0"></div>
<div class="t" style="left:863px;top:820px;color:#80397b">Script - General</div>
<div class="t" style="left:956px;top:820px">Script - Variant</div>
<!-- status -->
<div class="a" style="left:851px;top:844px;width:998px;height:1px;background:#c6c6c6"></div>
<div class="a" style="left:851px;top:845px;width:998px;height:37px;background:#f7f7f7"></div>
<svg style="left:863px;top:859px" width="13" height="10" viewBox="0 0 13 10"><path d="M5 3 H3.500 A2 2 0 0 0 3.500 7 H5 M8 3 H9.500 A2 2 0 0 1 9.500 7 H8 M4 5 H9" fill="none" stroke="#222" stroke-width="1.600" stroke-linecap="round"/></svg>
<div class="t" style="left:897px;top:857px;color:#5a5a5a">WYSIWYG status: Connected</div>
<div class="t" style="left:1067px;top:849px;color:#5a5a5a">Device details ()</div>
<div class="t" style="left:1067px;top:865px;color:#5a5a5a">600 x 177, scale = 1 (</div>
<!--/SCRIPT-->
<!--ABS-->
<!-- Abstract designer -->
<div class="a" style="left:1338px;top:147px;width:105px;height:21px;background:#cacaca"></div>
<div class="t" style="left:1344px;top:151px;font-size:11.6px;color:#7d7d7d">Abstract Designer</div>
<div class="a" style="left:1339px;top:167px;width:503px;height:3px;background:#d6d6d6"></div>
<div class="a dd" style="left:1831px;top:157px;border-top-color:#777"></div>
<div class="a" style="left:1339px;top:172px;width:414px;height:22px;background:#fff;border:1px solid #ababab"></div>
<div class="t" style="left:1343px;top:176px;font-size:11.6px">Match Chosen Variant</div>
<div class="a" style="left:1743px;top:181px;border:3px solid transparent;border-top:4px solid #111;border-bottom:0"></div>
<div class="a" style="left:1755px;top:172px;width:85px;height:22px;background:#e1e1e1;border:1px solid #adadad"></div>
<div class="t" style="left:1759px;top:176px;letter-spacing:-0.05px">Check Anchors</div>
<!-- canvas frame -->
<div class="a" style="left:1339px;top:196px;width:503px;height:641px;background:#f0f0f0;border:1px solid #9c9c9c"></div>
<div class="a" style="left:1340px;top:208px;width:484px;height:600px;background:linear-gradient(135deg,#a8a8a8 0%,#9c9c9c 50%,#8d8d8d 100%)"></div>
<div class="a" style="left:1340px;top:808px;width:484px;height:11px;background:#e6e6e6"></div>
<!-- vscroll -->
<div class="a" style="left:1825px;top:198px;width:15px;height:15px;background:#fff;border:1px solid #c4c4c4"></div>
<div class="a" style="left:1829px;top:203px;border:3.5px solid transparent;border-bottom:4px solid #b0b0b0;border-top:0"></div>
<div class="a" style="left:1826px;top:280px;width:13px;height:137px;background:#fff;border:1px solid #a6a6a6"></div>
<div class="a" style="left:1825px;top:803px;width:15px;height:15px;background:#fff;border:1px solid #c4c4c4"></div>
<div class="a" style="left:1829px;top:809px;border:3.5px solid transparent;border-top:4px solid #8c8c8c;border-bottom:0"></div>
<!-- hscroll -->
<div class="a" style="left:1809px;top:820px;width:15px;height:15px;background:#fff;border:1px solid #c4c4c4"></div>
<div class="a" style="left:1815px;top:824px;border:3.5px solid transparent;border-left:4px solid #8c8c8c;border-right:0"></div>
<!-- nav circle -->
<div class="a" style="left:1348px;top:205px;width:48px;height:48px;border-radius:50%;background:#fff;box-shadow:0 1px 3px rgba(0,0,0,0.55)"></div>
<svg style="left:1348px;top:205px" width="48" height="48" viewBox="0 0 48 48"><g fill="none" stroke="#111" stroke-width="2"><path d="M19.500 12 L24 7.500 L28.500 12"/><path d="M19.500 36 L24 40.500 L28.500 36"/><path d="M12 19.500 L7.500 24 L12 28.500"/><path d="M36 19.500 L40.500 24 L36 28.500"/></g></svg>
<div class="a" style="left:1403px;top:219px;width:22px;height:22px;border-radius:50%;background:#fff;box-shadow:0 1px 2px rgba(0,0,0,0.5)"></div>
<svg style="left:1403px;top:219px" width="22" height="22" viewBox="0 0 22 22"><path d="M10 7 L6 11 L10 15 M15.500 7 L11.500 11 L15.500 15" fill="none" stroke="#111" stroke-width="1.800"/></svg>
<!-- zoom pill -->
<div class="a" style="left:1358px;top:260px;width:28.500px;height:230px;border-radius:14px/9px;background:#fff;box-shadow:0 1px 2px rgba(0,0,0,0.45)"></div>
<div class="a" style="left:1370px;top:270px;width:4px;height:140px;border-radius:2px;background:#e4e4e4;border:1px solid #c9c9c9"></div>
<div class="a" style="left:1361px;top:310px;width:22px;height:11px;background:#fff;border:1px solid #a8a8a8;border-radius:1px"></div>
<div class="t" style="left:1358px;top:414px;width:29px;text-align:center;font-size:8.8px;color:#111;letter-spacing:-0.2px">100%</div>
<div class="a" style="left:1358px;top:429px;width:29px;height:1px;background:#c9c9c9"></div>
<svg style="left:1364px;top:437px" width="16" height="16" viewBox="0 0 16 16"><rect x="1" y="1" width="14" height="14" fill="none" stroke="#111" stroke-width="1.800"/><path d="M8 4 V12 M4 8 H12" stroke="#111" stroke-width="1"/><path d="M8 2.800 L9.800 5 H6.200 Z M8 13.200 L9.800 11 H6.200 Z M2.800 8 L5 6.200 V9.800 Z M13.200 8 L11 6.200 V9.800 Z" fill="#111"/></svg>
<svg style="left:1364px;top:463px" width="16" height="16" viewBox="0 0 16 16"><path d="M5 6 H1 V15 H15 V6 H11" fill="none" stroke="#111" stroke-width="1.800"/><path d="M8 1 V10" stroke="#111" stroke-width="1.600"/><path d="M4.800 8.500 H11.200 L8 12 Z" fill="#111"/></svg>
<!-- Button1 -->
<div class="a" style="left:1402px;top:248px;width:100px;height:60px;background:#d9562c;border:1px solid #1a1a1a;border-radius:2px"></div>
<div class="t" style="left:1402px;top:271px;width:100px;text-align:center;color:#fff;font-size:11.8px">Button1</div>
<div class="a" style="left:1450px;top:252px;width:4px;height:4px;border-radius:50%;background:#fff"></div>
<div class="a" style="left:1406px;top:276px;width:4px;height:4px;border-radius:50%;background:#fff"></div>
<!-- TextField1 -->
<div class="a" style="left:1512px;top:268px;width:290px;height:30px;background:#a9cfa9;border:4px solid #a30000"></div>
<div class="t" style="left:1512px;top:276px;width:290px;text-align:center;color:#fff;font-size:11.8px">TextField1</div>
<div class="a" style="left:1516px;top:281px;width:4px;height:4px;border-radius:50%;background:#fff"></div>
<div class="a" style="left:1655px;top:272px;width:4px;height:4px;border-radius:50%;background:#fff"></div>
<div class="hd" style="left:1506px;top:262px"></div><div class="hd" style="left:1506px;top:279px"></div><div class="hd" style="left:1506px;top:296px"></div>
<div class="hd" style="left:1653px;top:262px"></div><div class="hd" style="left:1653px;top:279px"></div><div class="hd" style="left:1653px;top:296px"></div>
<div class="hd" style="left:1800px;top:262px"></div><div class="hd" style="left:1800px;top:279px"></div><div class="hd" style="left:1800px;top:296px"></div>
<!--/ABS-->

<!-- ===== FORM WINDOW ===== -->
<div class="a" style="left:1174px;top:748px;width:600px;height:238px;border-radius:8px;background:#f3f3f3;border:1px solid rgba(0,0,0,0.16);box-shadow:0 14px 38px 4px rgba(0,0,0,0.33);overflow:hidden">
<div class="a" style="left:-1px;top:-1px;width:600px;height:31px;background:linear-gradient(90deg,#edf1fa,#f3f3f8)"></div>
<div class="a" style="left:-1px;top:207px;width:600px;height:30px;background:#fff"></div>
</div>
<div class="t" style="left:1185px;top:754px;font-size:16px;font-weight:bold;color:#d81b8c;line-height:20px">J</div>
<div class="t" style="left:1203px;top:756px;color:#000;font-size:11.4px;letter-spacing:-0.1px">Form (WYSIWYG Designer)</div>
<div class="a" style="left:1655px;top:763px;width:10px;height:1px;background:#111"></div>
<div class="a" style="left:1700px;top:758px;width:10px;height:10px;border:1px solid #111;border-radius:1.5px"></div>
<svg style="left:1746px;top:758px" width="10" height="10" viewBox="0 0 10 10"><path d="M0.300 0.300 L9.700 9.700 M9.700 0.300 L0.300 9.700" stroke="#111" stroke-width="1.100"/></svg>
<!-- button -->
<div class="a" style="left:1294px;top:819px;width:100px;height:60px;border:1px solid #b4b4b4;border-radius:3px;background:linear-gradient(#f0f0f0,#dadada)"></div>
<div class="t" style="left:1293px;top:841px;width:100px;text-align:center;font-size:12.4px;letter-spacing:-0.7px;color:#333"><span style="letter-spacing:3px">E</span>rlemVguv</div>
<!-- text field -->
<div class="a" style="left:1404px;top:839px;width:290px;height:31px;background:#fff;border:2px solid #1ea4e0;border-radius:4px"></div>
<div class="a" style="left:1404px;top:846px;height:18px;font-size:15px;line-height:18px;color:#444;white-space:nowrap"><span class="a" style="left:10.4px;top:0;letter-spacing:0.00px;transform:scaleX(0.794);transform-origin:0 0">C</span><span class="a" style="left:21.0px;top:0;letter-spacing:-2.86px;transform:scaleX(0.740);transform-origin:0 0">DE</span><span class="a" style="left:37.9px;top:0;letter-spacing:0.00px;transform:scaleX(0.740);transform-origin:0 0">F</span><span class="a" style="left:48.3px;top:0;letter-spacing:-2.05px;transform:scaleX(0.740);transform-origin:0 0">GHI</span><span class="a" style="left:73.3px;top:0;letter-spacing:0.00px;transform:scaleX(0.740);transform-origin:0 0">J</span><span class="a" style="left:84.8px;top:0;letter-spacing:-2.27px;transform:scaleX(0.740);transform-origin:0 0">KLMNO</span><span class="a" style="left:123.3px;top:0;letter-spacing:0.00px;transform:scaleX(0.740);transform-origin:0 0">P</span><span class="a" style="left:134.3px;top:0;letter-spacing:0.00px;transform:scaleX(0.791);transform-origin:0 0">QRS</span><span class="a" style="left:165.5px;top:0;letter-spacing:0.00px;transform:scaleX(0.792);transform-origin:0 0">TUVWXY</span><span class="a" style="left:223.3px;top:0;letter-spacing:0.00px;transform:scaleX(0.768);transform-origin:0 0">[</span><span class="a" style="left:232.0px;top:0;letter-spacing:0.00px;transform:scaleX(0.928);transform-origin:0 0">Z</span><span class="a" style="left:241.3px;top:0;letter-spacing:0.00px;transform:scaleX(1.000);transform-origin:0 0">&#92;</span></div>
<!-- status -->
<svg style="left:1179px;top:966px" width="13" height="10" viewBox="0 0 13 10"><path d="M5 3 H3.500 A2 2 0 0 0 3.500 7 H5 M8 3 H9.500 A2 2 0 0 1 9.500 7 H8 M4 5 H9" fill="none" stroke="#222" stroke-width="1.600" stroke-linecap="round"/></svg>
<div class="t" style="left:1198px;top:964px;font-size:11.4px;letter-spacing:-0.5px;color:#333"><span style="letter-spacing:0.6px">E</span>qppgevgf</div>
<div class="t" style="left:1638px;top:964px;font-size:11.2px;color:#444">822 z 399</div>
<div class="a" style="left:1694px;top:960px;width:1px;height:21px;background:#d9d9d9"></div>
<div class="t" style="left:1699px;top:964px;font-size:11.2px;letter-spacing:-0.5px;color:#444">Xgtukqp&lt;3052</div>

</body></html>
